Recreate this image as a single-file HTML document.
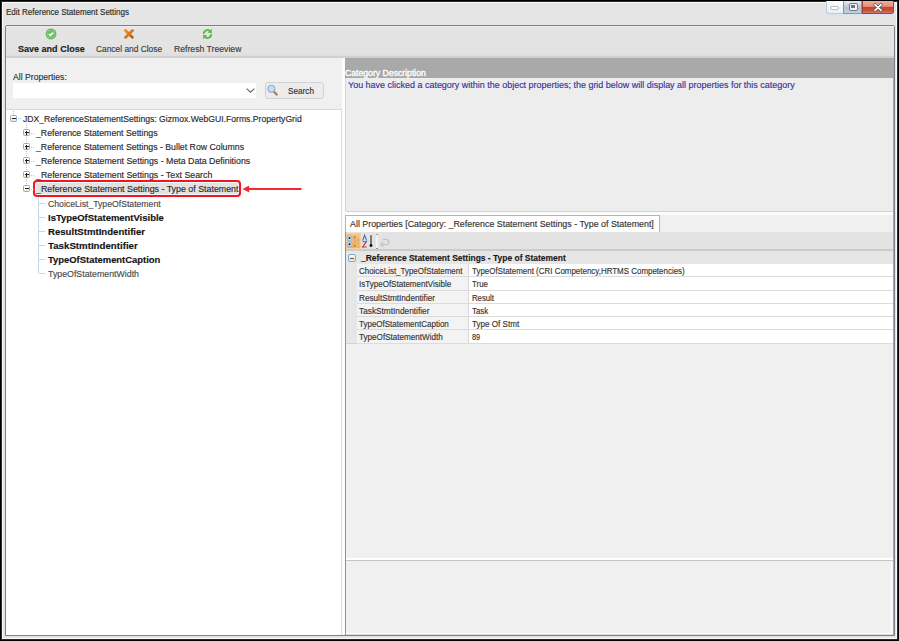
<!DOCTYPE html>
<html><head><meta charset="utf-8">
<style>
*{box-sizing:border-box;margin:0;padding:0}
html,body{width:899px;height:641px;overflow:hidden;background:#000}
body{position:relative;font-family:"Liberation Sans",sans-serif;color:#333}
.a{position:absolute}
.t{position:absolute;white-space:nowrap;line-height:1;transform-origin:0 0;-webkit-text-stroke:0.15px currentColor}
.ic{position:absolute;width:7px;height:7px;border:1px solid #86aed4;border-radius:1.5px;background:linear-gradient(#fdfdfd 40%,#efe2c8)}
.ic i.h{position:absolute;left:.5px;top:2px;width:4px;height:1px;background:#1a1a1a}
.ic i.v{position:absolute;left:2px;top:.5px;width:1px;height:4px;background:#1a1a1a}
.ic2{position:absolute;width:8px;height:8px;border:1px solid #82acd4;border-radius:2px;background:linear-gradient(#f6f6f6,#f0e4cc)}
.ic2 i{position:absolute;left:1px;top:2.5px;width:4px;height:1px;background:#555}
.dv{position:absolute;width:1px;border-left:1px dotted #b4c8dc}
.dh{position:absolute;height:1px;border-top:1px dotted #b4c8dc}
</style></head><body>
<div class="a" style="left:0;top:0;width:899px;height:641px;background:#000"></div>
<div class="a" style="left:1px;top:1px;width:897px;height:639px;background:#2a2a2a"></div>
<div class="a" style="left:2px;top:2px;width:895px;height:637px;background:#e5e5e5;border:1px solid #fbfbfb"></div>
<div class="t" style="left:6.00px;top:8.10px;font-size:9.1px;color:#2a2a2a;transform:scaleX(0.8816);">Edit Reference Statement Settings</div>
<div class="a" style="left:826px;top:1px;width:18px;height:13px;border:1px solid #c4c8ce;border-top:none;border-right:none;border-radius:0 0 0 3px;background:linear-gradient(#fefefe,#eceef2)"></div>
<div class="a" style="left:830px;top:6px;width:9px;height:4px;border:1px solid #b8bcc4;border-radius:2px;background:#fff"></div>
<div class="a" style="left:843px;top:1px;width:19px;height:13px;border:1px solid #8c96a2;border-top:none;background:linear-gradient(#e6ecf2,#b4c0ce 60%,#c8d2dc)"></div>
<div class="a" style="left:848.5px;top:3px;width:9px;height:7.5px;border:1.3px solid #707a88;border-radius:2px;background:#f2f4f8"></div>
<div class="a" style="left:851px;top:5.4px;width:4px;height:2.6px;background:#6a7688"></div>
<div class="a" style="left:862px;top:1px;width:32px;height:13px;border:1px solid #9a4438;border-top:none;border-radius:0 0 3px 0;background:linear-gradient(#ecaea0,#e4907e 45%,#c8442c 52%,#cc5038 80%,#d87a66)"></div>
<svg class="a" style="left:873px;top:2.5px" width="10" height="9" viewBox="0 0 10 9"><path d="M2 1.6L8 7.4M8 1.6L2 7.4" stroke="#4a5460" stroke-width="3" stroke-linecap="round"/><path d="M2 1.6L8 7.4M8 1.6L2 7.4" stroke="#fff" stroke-width="1.7" stroke-linecap="round"/></svg>
<div class="a" style="left:824px;top:14px;width:70px;height:1.5px;background:#d6e6f4"></div>
<div class="a" style="left:5px;top:25px;width:890px;height:611px;border:1px solid #7a8189;border-radius:2px 2px 0 0;background:#f0f0f0"></div>
<div class="a" style="left:6px;top:26px;width:888px;height:30px;background:linear-gradient(#ededed,#e4e4e4 2px,#e3e3e3 26px,#dedede)"></div>
<div class="a" style="left:6px;top:56px;width:888px;height:2px;background:#d0d0d0"></div>
<svg class="a" style="left:45px;top:28px" width="12" height="12" viewBox="0 0 12 12"><circle cx="6" cy="6" r="5.4" fill="#48ac48"/><circle cx="6" cy="6" r="4.1" fill="#66c262" stroke="#a8dca4" stroke-width=".7"/><path d="M3.9 6.1L5.4 7.4L8.2 4.6" stroke="#fff" stroke-width="1.6" fill="none"/></svg>
<div class="t" style="left:17.80px;top:44.47px;font-size:9.6px;color:#222;font-weight:bold;transform:scaleX(0.9405);">Save and Close</div>
<svg class="a" style="left:124px;top:28.6px" width="10" height="10" viewBox="0 0 10 10"><defs><linearGradient id="xg" x1="0" y1="0" x2="1" y2="1"><stop offset="0" stop-color="#f4a81c"/><stop offset="1" stop-color="#d0500c"/></linearGradient></defs><path d="M1.6 1.6L8.4 8.4M8.4 1.6L1.6 8.4" stroke="#b0500c" stroke-width="2.6" stroke-linecap="round"/><path d="M1.6 1.6L8.4 8.4M8.4 1.6L1.6 8.4" stroke="url(#xg)" stroke-width="1.8" stroke-linecap="round"/></svg>
<div class="t" style="left:95.90px;top:44.81px;font-size:9.2px;color:#3a3a3a;transform:scaleX(0.9113);">Cancel and Close</div>
<svg class="a" style="left:202px;top:28px" width="11" height="12" viewBox="0 0 11 12"><path d="M1.8 5.8A3.7 3.7 0 0 1 8.3 3.4" stroke="#5cba46" stroke-width="2" fill="none"/><path d="M9.8 0.8L9.8 5.2L5.6 4.4Z" fill="#5cba46"/><path d="M9.2 6.2A3.7 3.7 0 0 1 2.7 8.6" stroke="#5cba46" stroke-width="2" fill="none"/><path d="M1.2 11.2L1.2 6.8L5.4 7.6Z" fill="#5cba46"/></svg>
<div class="t" style="left:173.60px;top:44.81px;font-size:9.2px;color:#3a3a3a;transform:scaleX(0.9427);">Refresh Treeview</div>
<div class="t" style="left:12.60px;top:72.58px;font-size:9.0px;color:#333;transform:scaleX(0.9602);">All Properties:</div>
<div class="a" style="left:13px;top:83px;width:243px;height:15px;background:#fff"></div>
<svg class="a" style="left:246px;top:88px" width="9" height="5" viewBox="0 0 9 5"><path d="M.6 .6L4.5 4.2L8.4 .6" stroke="#666" stroke-width="1.1" fill="none"/></svg>
<div class="a" style="left:265px;top:82px;width:59px;height:17px;border:1px solid #d2d2d2;border-radius:3px;background:#ececec"></div>
<svg class="a" style="left:267px;top:84px" width="11" height="12" viewBox="0 0 11 12"><path d="M6.2 6.8L9.6 10.6" stroke="#b47a3c" stroke-width="2.2" stroke-linecap="round"/><circle cx="4.4" cy="4.8" r="3.6" fill="#c4dcf2" stroke="#80a8d0" stroke-width="1"/></svg>
<div class="t" style="left:288.00px;top:87.18px;font-size:9.0px;color:#333;transform:scaleX(0.9113);">Search</div>
<div class="a" style="left:6px;top:109px;width:336px;height:526px;background:#fff;border-top:1px solid #d8d8d8"></div>
<div class="a" style="left:341px;top:109px;width:1px;height:526px;background:#dedede"></div>
<div class="a" style="left:342px;top:58px;width:3px;height:577px;background:#fcfcfc"></div>
<div class="a" style="left:35px;top:182px;width:204px;height:13px;background:#e2e2e2;border:1px solid #f2fafc"></div>
<div class="a" style="left:33px;top:180px;width:208px;height:17px;border:2px solid #f2141e;border-radius:4px"></div>
<svg class="a" style="left:241px;top:183px" width="62" height="12" viewBox="0 0 62 12"><path d="M5 6H60.5" stroke="#ee2a2e" stroke-width="2"/><path d="M1.5 6L8.2 2.4V9.6Z" fill="#ee2a2e"/></svg>
<div class="dv" style="left:26px;top:123px;height:7px"></div>
<div class="dv" style="left:26px;top:137px;height:49px"></div>
<div class="dh" style="left:18px;top:118px;width:3px"></div>
<div class="dv" style="left:13px;top:111px;height:3px"></div>
<div class="ic" style="left:10px;top:114.8px"><i class="h"></i></div>
<div class="t" style="left:23.00px;top:115.18px;font-size:9.0px;color:#2a2a2a;transform:scaleX(0.9579);">JDX_ReferenceStatementSettings: Gizmox.WebGUI.Forms.PropertyGrid</div>
<div class="dh" style="left:31px;top:133px;width:3px"></div>
<div class="ic" style="left:23px;top:129px"><i class="h"></i><i class="v"></i></div>
<div class="t" style="left:35.50px;top:129.18px;font-size:9.0px;color:#2a2a2a;transform:scaleX(0.9722);">_Reference Statement Settings</div>
<div class="dh" style="left:31px;top:147px;width:3px"></div>
<div class="ic" style="left:23px;top:143px"><i class="h"></i><i class="v"></i></div>
<div class="t" style="left:35.50px;top:143.18px;font-size:9.0px;color:#2a2a2a;transform:scaleX(0.9715);">_Reference Statement Settings - Bullet Row Columns</div>
<div class="dh" style="left:31px;top:161px;width:3px"></div>
<div class="ic" style="left:23px;top:157px"><i class="h"></i><i class="v"></i></div>
<div class="t" style="left:35.50px;top:157.18px;font-size:9.0px;color:#2a2a2a;transform:scaleX(0.9775);">_Reference Statement Settings - Meta Data Definitions</div>
<div class="dh" style="left:31px;top:175px;width:3px"></div>
<div class="ic" style="left:23px;top:171px"><i class="h"></i><i class="v"></i></div>
<div class="t" style="left:35.50px;top:171.18px;font-size:9.0px;color:#2a2a2a;transform:scaleX(0.9771);">_Reference Statement Settings - Text Search</div>
<div class="dh" style="left:31px;top:189px;width:3px"></div>
<div class="ic" style="left:23px;top:185px"><i class="h"></i></div>
<div class="t" style="left:35.50px;top:185.18px;font-size:9.0px;color:#2a2a2a;transform:scaleX(0.9832);">_Reference Statement Settings - Type of Statement</div>
<div class="dv" style="left:38px;top:197px;height:76px;border-left-style:solid;border-color:#c6d6e6"></div>
<div class="a" style="left:39px;top:203px;width:6px;height:1px;background:#c6d6e6"></div>
<div class="t" style="left:48.20px;top:199.78px;font-size:9.0px;color:#4a4a4a;transform:scaleX(0.9619);">ChoiceList_TypeOfStatement</div>
<div class="a" style="left:39px;top:217px;width:6px;height:1px;background:#c6d6e6"></div>
<div class="t" style="left:48.20px;top:213.53px;font-size:9.3px;color:#151515;font-weight:bold;transform:scaleX(1.0172);">IsTypeOfStatementVisible</div>
<div class="a" style="left:39px;top:231px;width:6px;height:1px;background:#c6d6e6"></div>
<div class="t" style="left:48.20px;top:227.53px;font-size:9.3px;color:#151515;font-weight:bold;transform:scaleX(1.0328);">ResultStmtIndentifier</div>
<div class="a" style="left:39px;top:245px;width:6px;height:1px;background:#c6d6e6"></div>
<div class="t" style="left:48.20px;top:241.53px;font-size:9.3px;color:#151515;font-weight:bold;transform:scaleX(1.0429);">TaskStmtIndentifier</div>
<div class="a" style="left:39px;top:259px;width:6px;height:1px;background:#c6d6e6"></div>
<div class="t" style="left:48.20px;top:255.53px;font-size:9.3px;color:#151515;font-weight:bold;transform:scaleX(1.0127);">TypeOfStatementCaption</div>
<div class="a" style="left:39px;top:273px;width:6px;height:1px;background:#c6d6e6"></div>
<div class="t" style="left:48.20px;top:269.78px;font-size:9.0px;color:#4a4a4a;transform:scaleX(0.9780);">TypeOfStatementWidth</div>
<div class="a" style="left:345px;top:58px;width:549px;height:154px;background:#ededed;border:1px solid #d2d2d2;border-top:none;border-radius:0 0 2px 2px"></div>
<div class="a" style="left:345px;top:58px;width:549px;height:20px;background:#a9a9a9"></div>
<div class="t" style="left:344.80px;top:69.18px;font-size:9.0px;color:#fff;transform:scaleX(0.9626);-webkit-text-stroke:0.35px #fff;">Category Description</div>
<div class="t" style="left:348.30px;top:81.48px;font-size:9.0px;color:#3434a4;transform:scaleX(0.9962);">You have clicked a category within the object properties; the grid below will display all properties for this category</div>
<div class="a" style="left:342px;top:212px;width:552px;height:3px;background:#fcfcfc"></div>
<div class="a" style="left:345px;top:215px;width:549px;height:420px;background:#f0f0f0;border-left:1px solid #8c9298"></div>
<div class="a" style="left:893px;top:58px;width:1px;height:577px;background:#a4aab0"></div>
<div class="a" style="left:345px;top:215px;width:315px;height:17px;background:#fff;border:1px solid #b0b6be;border-bottom:none"></div>
<div class="t" style="left:350.20px;top:220.18px;font-size:9.0px;color:#333;transform:scaleX(0.9848);">All Properties [Category: _Reference Statement Settings - Type of Statement]</div>
<div class="a" style="left:346px;top:232px;width:547px;height:18px;background:#e3e3e3"></div>
<div class="a" style="left:346px;top:249px;width:547px;height:2px;background:#cbcbcb"></div>
<div class="a" style="left:346px;top:233px;width:15px;height:16px;background:linear-gradient(#fcc27a,#fdb056);border:1px solid #fccf94"></div>
<svg class="a" style="left:346px;top:233px" width="15" height="16" viewBox="0 0 15 16"><circle cx="3.5" cy="5" r="2.6" fill="#cfe4f6" stroke="#86b0d6" stroke-width=".9"/><circle cx="3.5" cy="5" r="1" fill="#111"/><circle cx="3.5" cy="11.3" r="2.6" fill="#cfe4f6" stroke="#86b0d6" stroke-width=".9"/><circle cx="3.5" cy="11.3" r="1" fill="#111"/><rect x="7.5" y="4" width="2.5" height="10" fill="#d4b08a"/><rect x="11" y="5" width="2" height="6" fill="#d8b48c"/><rect x="7.5" y="3.5" width="2.5" height=".8" fill="#8a6a4a"/><rect x="7.5" y="12.6" width="2.5" height=".8" fill="#8a6a4a"/></svg>
<svg class="a" style="left:361px;top:234px" width="13" height="14" viewBox="0 0 13 14"><path d="M1.6 6.6L3.6 1.2L5.6 6.6" stroke="#3c6cd0" stroke-width="1.1" fill="none"/><path d="M1.6 7.8H5.4L1.6 13H5.6" stroke="#b03a40" stroke-width="1.1" fill="none"/><path d="M10 1.2V11" stroke="#333" stroke-width="1.2"/><circle cx="10" cy="11.6" r="1.4" fill="#000"/></svg>
<div class="a" style="left:376px;top:234px;width:2px;height:15px;background:#f4f4f4;border-top:1px solid #9a9a9a;border-bottom:1px solid #9a9a9a"></div>
<svg class="a" style="left:379px;top:236px" width="11" height="11" viewBox="0 0 11 11"><path d="M3.4 8.6H7.2A2.6 2.6 0 0 0 7.2 3.4H3.6" stroke="#c4c4c4" stroke-width="1.4" fill="none"/><path d="M4.6 6.2L1.8 8.6L4.6 11" stroke="#c4c4c4" stroke-width="1.4" fill="none"/></svg>
<div class="a" style="left:346px;top:251px;width:547px;height:13px;background:#e6e6e6"></div>
<div class="ic2" style="left:347.5px;top:254px"><i></i></div>
<div class="t" style="left:360.50px;top:253.73px;font-size:9.3px;color:#1a1a1a;font-weight:bold;transform:scaleX(0.9095);">_Reference Statement Settings - Type of Statement</div>
<div class="a" style="left:346px;top:264px;width:11px;height:79.6px;background:#e6e6e6;border-bottom:1px solid #d4d4d4"></div>
<div class="a" style="left:357px;top:264.00px;width:111px;height:13.27px;background:#f3f3f3;border-bottom:1px solid #dcdcdc"></div>
<div class="a" style="left:468px;top:264.00px;width:425px;height:13.27px;background:#fff;border-bottom:1px solid #dcdcdc;border-left:1px solid #d8d8d8"></div>
<div class="t" style="left:358.70px;top:267.08px;font-size:9.0px;color:#333;transform:scaleX(0.8833);">ChoiceList_TypeOfStatement</div>
<div class="t" style="left:471.80px;top:267.08px;font-size:9.0px;color:#333;transform:scaleX(0.8835);">TypeOfStatement (CRI Competency,HRTMS Competencies)</div>
<div class="a" style="left:357px;top:277.27px;width:111px;height:13.27px;background:#f3f3f3;border-bottom:1px solid #dcdcdc"></div>
<div class="a" style="left:468px;top:277.27px;width:425px;height:13.27px;background:#fff;border-bottom:1px solid #dcdcdc;border-left:1px solid #d8d8d8"></div>
<div class="t" style="left:358.70px;top:280.35px;font-size:9.0px;color:#333;transform:scaleX(0.8918);">IsTypeOfStatementVisible</div>
<div class="t" style="left:471.80px;top:280.35px;font-size:9.0px;color:#333;transform:scaleX(0.8750);">True</div>
<div class="a" style="left:357px;top:290.54px;width:111px;height:13.27px;background:#f3f3f3;border-bottom:1px solid #dcdcdc"></div>
<div class="a" style="left:468px;top:290.54px;width:425px;height:13.27px;background:#fff;border-bottom:1px solid #dcdcdc;border-left:1px solid #d8d8d8"></div>
<div class="t" style="left:358.70px;top:293.62px;font-size:9.0px;color:#333;transform:scaleX(0.9097);">ResultStmtIndentifier</div>
<div class="t" style="left:471.80px;top:293.62px;font-size:9.0px;color:#333;transform:scaleX(0.8622);">Result</div>
<div class="a" style="left:357px;top:303.81px;width:111px;height:13.27px;background:#f3f3f3;border-bottom:1px solid #dcdcdc"></div>
<div class="a" style="left:468px;top:303.81px;width:425px;height:13.27px;background:#fff;border-bottom:1px solid #dcdcdc;border-left:1px solid #d8d8d8"></div>
<div class="t" style="left:358.70px;top:306.89px;font-size:9.0px;color:#333;transform:scaleX(0.9199);">TaskStmtIndentifier</div>
<div class="t" style="left:471.80px;top:306.89px;font-size:9.0px;color:#333;transform:scaleX(0.8749);">Task</div>
<div class="a" style="left:357px;top:317.08px;width:111px;height:13.27px;background:#f3f3f3;border-bottom:1px solid #dcdcdc"></div>
<div class="a" style="left:468px;top:317.08px;width:425px;height:13.27px;background:#fff;border-bottom:1px solid #dcdcdc;border-left:1px solid #d8d8d8"></div>
<div class="t" style="left:358.70px;top:320.16px;font-size:9.0px;color:#333;transform:scaleX(0.8886);">TypeOfStatementCaption</div>
<div class="t" style="left:471.80px;top:320.16px;font-size:9.0px;color:#333;transform:scaleX(0.8988);">Type Of Stmt</div>
<div class="a" style="left:357px;top:330.35px;width:111px;height:13.27px;background:#f3f3f3;border-bottom:1px solid #dcdcdc"></div>
<div class="a" style="left:468px;top:330.35px;width:425px;height:13.27px;background:#fff;border-bottom:1px solid #dcdcdc;border-left:1px solid #d8d8d8"></div>
<div class="t" style="left:358.70px;top:333.43px;font-size:9.0px;color:#333;transform:scaleX(0.9006);">TypeOfStatementWidth</div>
<div class="t" style="left:471.80px;top:333.43px;font-size:9.0px;color:#333;transform:scaleX(0.8187);">89</div>
<div class="a" style="left:346px;top:558px;width:547px;height:2px;background:#fff"></div>
<div class="a" style="left:346px;top:560px;width:547px;height:1px;background:#c4c4c4"></div>
<div class="a" style="left:346px;top:561px;width:546px;height:73px;border-right:1px solid #fff;border-bottom:1px solid #fff"></div>
<div class="a" style="left:346px;top:634px;width:547px;height:1px;background:#d8d8d8"></div>
</body></html>
